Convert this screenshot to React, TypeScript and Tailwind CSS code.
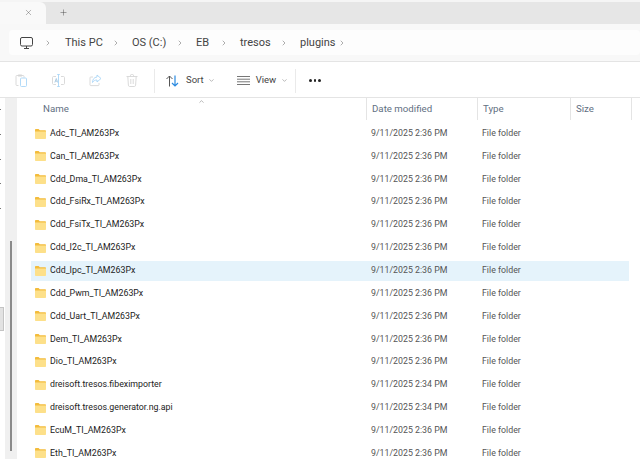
import { ChevronRight, ChevronDown, ChevronUp, X, Plus } from 'lucide-react';

const FILES = [
  { name: 'Adc_TI_AM263Px', date: '9/11/2025 2:36 PM' },
  { name: 'Can_TI_AM263Px', date: '9/11/2025 2:36 PM' },
  { name: 'Cdd_Dma_TI_AM263Px', date: '9/11/2025 2:36 PM' },
  { name: 'Cdd_FsiRx_TI_AM263Px', date: '9/11/2025 2:36 PM' },
  { name: 'Cdd_FsiTx_TI_AM263Px', date: '9/11/2025 2:36 PM' },
  { name: 'Cdd_I2c_TI_AM263Px', date: '9/11/2025 2:36 PM' },
  { name: 'Cdd_Ipc_TI_AM263Px', date: '9/11/2025 2:36 PM', selected: true },
  { name: 'Cdd_Pwm_TI_AM263Px', date: '9/11/2025 2:36 PM' },
  { name: 'Cdd_Uart_TI_AM263Px', date: '9/11/2025 2:36 PM' },
  { name: 'Dem_TI_AM263Px', date: '9/11/2025 2:36 PM' },
  { name: 'Dio_TI_AM263Px', date: '9/11/2025 2:36 PM' },
  { name: 'dreisoft.tresos.fibeximporter', date: '9/11/2025 2:34 PM' },
  { name: 'dreisoft.tresos.generator.ng.api', date: '9/11/2025 2:34 PM' },
  { name: 'EcuM_TI_AM263Px', date: '9/11/2025 2:36 PM' },
  { name: 'Eth_TI_AM263Px', date: '9/11/2025 2:36 PM' },
];

const CRUMBS = [
  { label: 'This PC', w: 'w-[67px]' },
  { label: 'OS (C:)', w: 'w-[64px]' },
  { label: 'EB', w: 'w-[44px]' },
  { label: 'tresos', w: 'w-[60px]' },
  { label: 'plugins', w: 'w-[58px]' },
];

function Folder() {
  return (
    <svg width="11" height="10" viewBox="0 0 11 10" className="shrink-0">
      <path d="M0 .8C0 .4.3 0 .8 0h2.800l1.200 1.200h5.400c.4 0 .8.3.8.8V3H0z" fill="#f3bc3c" />
      <path d="M0 2.600h11v6.600c0 .4-.3.8-.8.8H.8c-.5 0-.8-.4-.8-.8z" fill="#fde08a" />
    </svg>
  );
}

function PasteIcon() {
  return (
    <svg width="13" height="13" viewBox="0 0 13 13" fill="none" strokeWidth="0.9" className="shrink-0">
      <path d="M3.500 11.500H1.800c-.5 0-.8-.3-.8-.8V2.300c0-.5.3-.8.8-.8h6.400c.5 0 .8.3.8.8v1.200" stroke="#d6d6d6" />
      <rect x="3" y=".5" width="4" height="2" rx=".5" fill="#d6d6d6" />
      <rect x="5.500" y="4" width="6" height="8.500" rx="1" stroke="#a9d6f7" />
    </svg>
  );
}

function RenameIcon() {
  return (
    <svg width="13" height="13" viewBox="0 0 13 13" fill="none" strokeWidth="0.9" className="shrink-0">
      <path d="M4 2.500H1.500c-.5 0-1 .4-1 1v6c0 .6.5 1 1 1H4M9 2.500h2.500c.5 0 1 .4 1 1v6c0 .6-.5 1-1 1H9" stroke="#d6d6d6" />
      <path d="M6.500 .5v12M5.200 .5h2.600M5.200 12.500h2.600" stroke="#a9d6f7" />
      <path d="M2.800 8.500l1.500-4 1.300 4M3.300 7.200h1.900" stroke="#a9c8e0" />
    </svg>
  );
}

function ShareIcon() {
  return (
    <svg width="13" height="13" viewBox="0 0 13 13" fill="none" strokeWidth="0.9" className="shrink-0">
      <path d="M4 3H1.800c-.5 0-.8.3-.8.8v7c0 .5.3.8.8.8h7.400c.5 0 .8-.3.8-.8V9" stroke="#d6d6d6" />
      <path d="M8 1l4 3.500L8 8V6C6 6 4.500 6.800 3.500 8.500 3.500 5.500 5 3.300 8 3z" stroke="#a9d6f7" />
    </svg>
  );
}

function TrashIcon() {
  return (
    <svg width="12" height="13" viewBox="0 0 12 13" fill="none" stroke="#d6d6d6" strokeWidth="0.9" className="shrink-0">
      <path d="M.5 2.500h11M4.500 2.500V1.300c0-.4.3-.8.8-.8h1.400c.5 0 .8.4.8.8v1.200M1.800 2.500l.6 8.700c0 .7.5 1.300 1.200 1.300h4.800c.7 0 1.200-.6 1.200-1.300l.6-8.700M4.800 5v5M7.200 5v5" />
    </svg>
  );
}

function SortIcon() {
  return (
    <svg width="13" height="12" viewBox="0 0 13 12" fill="none" strokeWidth="1" className="shrink-0">
      <path d="M3.500 11.500V1M.5 4l3-3 3 3" stroke="#555" />
      <path d="M9 .5V11M6 8l3 3 3-3" stroke="#2a8ae0" strokeWidth="1.200" />
    </svg>
  );
}

function ViewIcon() {
  return (
    <svg width="13" height="9" viewBox="0 0 13 9" className="shrink-0">
      <path d="M0 .5h13M0 3.200h13M0 5.800h13M0 8.500h13" stroke="#777" strokeWidth="1" />
    </svg>
  );
}

function PcIcon() {
  return (
    <svg width="13" height="12" viewBox="0 0 13 12" fill="none" stroke="#444" strokeWidth="1" className="shrink-0">
      <rect x=".5" y=".5" width="12" height="8.500" rx="1.500" />
      <path d="M4 11.500h5M6.500 9v2.500" />
    </svg>
  );
}

export default function App() {
  return (
    <div className="w-[640px] h-[467px] overflow-hidden bg-white text-[#333] text-[8.8px] font-['Roboto',sans-serif]">
      {/* Tabs */}
      <div className="h-[24px] bg-[#e6e6e6] border-t-2 border-[#f5f5f5] flex items-stretch">
        <div className="w-[46px] bg-[#f9f9f9] rounded-tr-md flex items-center justify-end pb-[2px] pr-[13px]">
          <X size={9} strokeWidth={1} className="text-[#444]" />
        </div>
        <div className="ml-[13px] pb-[2px] flex items-center">
          <Plus size={9} strokeWidth={1.2} className="text-[#444]" />
        </div>
      </div>

      {/* Address bar */}
      <div className="h-[38px] bg-[#f8f8f8] border-b border-[#e4e4e4] pl-[9px] py-[6px]">
        <div className="h-[25px] pt-[1px] bg-[#fdfdfd] rounded flex items-center pl-[11px] text-[11px] text-[#444]">
          <PcIcon />
          <ChevronRight size={8} strokeWidth={1.3} className="ml-[11px] mr-[13px] text-[#444]" />
          {CRUMBS.map((c) => (
            <div key={c.label} className={`flex items-center whitespace-nowrap ${c.w}`}>
              <span className="flex-1">{c.label}</span>
              <ChevronRight size={8} strokeWidth={1.3} className="mr-[12px] text-[#444]" />
            </div>
          ))}
        </div>
      </div>

      {/* Toolbar */}
      <div className="h-[36px] pt-[2px] border-b border-[#e4e4e4] flex items-center text-[#444] text-[9.5px]">
        <div className="w-[154px] pl-[15px] flex items-center gap-[24px]">
          <PasteIcon />
          <RenameIcon />
          <ShareIcon />
          <TrashIcon />
        </div>
        <div className="h-[24px] w-[142px] border-x border-[#eaeaea] flex items-center pl-[11px]">
          <SortIcon />
          <span className="ml-[7px]">Sort</span>
          <ChevronDown size={7} className="ml-[4px] text-[#888]" />
          <span className="ml-[22px]"><ViewIcon /></span>
          <span className="ml-[6px]">View</span>
          <ChevronDown size={7} className="ml-[5px] text-[#888]" />
        </div>
        <div className="ml-[13px] flex gap-[2px]">
          <div className="w-[2.5px] h-[2.5px] rounded-full bg-[#222]" />
          <div className="w-[2.5px] h-[2.5px] rounded-full bg-[#222]" />
          <div className="w-[2.5px] h-[2.5px] rounded-full bg-[#222]" />
        </div>
      </div>

      <div className="flex">
        {/* Nav pane edge */}
        <div className="w-[5px] pt-[11px]">
          <div className="flex flex-col gap-[23.8px]">
            {[0, 1, 2, 3, 4].map((i) => (
              <div key={i} className="w-[1px] h-[1px] bg-[#777]" />
            ))}
          </div>
          <div className="mt-[98px] w-[4px] h-[24px] bg-[#e2e2e2] border border-l-0 border-[#c4c4c4]" />
        </div>
        <div className="w-[12px] h-[361px] bg-[#f0f0f0] pl-[5px] pt-[143px]">
          <div className="w-[2px] h-[210px] bg-[#8a8a8a]" />
        </div>

        {/* File list */}
        <div className="flex-1 pl-[14px] pr-[8px]">
          <div className="relative h-[22px] flex items-center text-[#5f6f82] text-[9.7px]">
            <ChevronUp size={7} className="absolute left-[167px] top-0 text-[#888]" />
            <span className="w-[335px] pl-[12px]">Name</span>
            <span className="w-[111px] h-full pl-[5px] border-l border-[#e4e4e4] flex items-center">Date modified</span>
            <span className="w-[93px] h-full pl-[5px] border-l border-[#e4e4e4] flex items-center">Type</span>
            <span className="w-[62px] h-full pl-[5px] border-x border-[#e4e4e4] flex items-center">Size</span>
          </div>
          <div className="pt-[3.5px] mr-[3px] flex flex-col gap-[2.85px]">
            {FILES.map((f) => (
              <div key={f.name} className={`h-[20px] flex items-center ${f.selected ? 'bg-[#e5f3fb]' : ''}`}>
                <div className="w-[340px] pl-[4px] flex items-center gap-[4px] text-[#222]">
                  <Folder />
                  <span>{f.name}</span>
                </div>
                <span className="w-[111px] text-[#555]">{f.date}</span>
                <span className="text-[#555]">File folder</span>
              </div>
            ))}
          </div>
        </div>
      </div>
    </div>
  );
}
